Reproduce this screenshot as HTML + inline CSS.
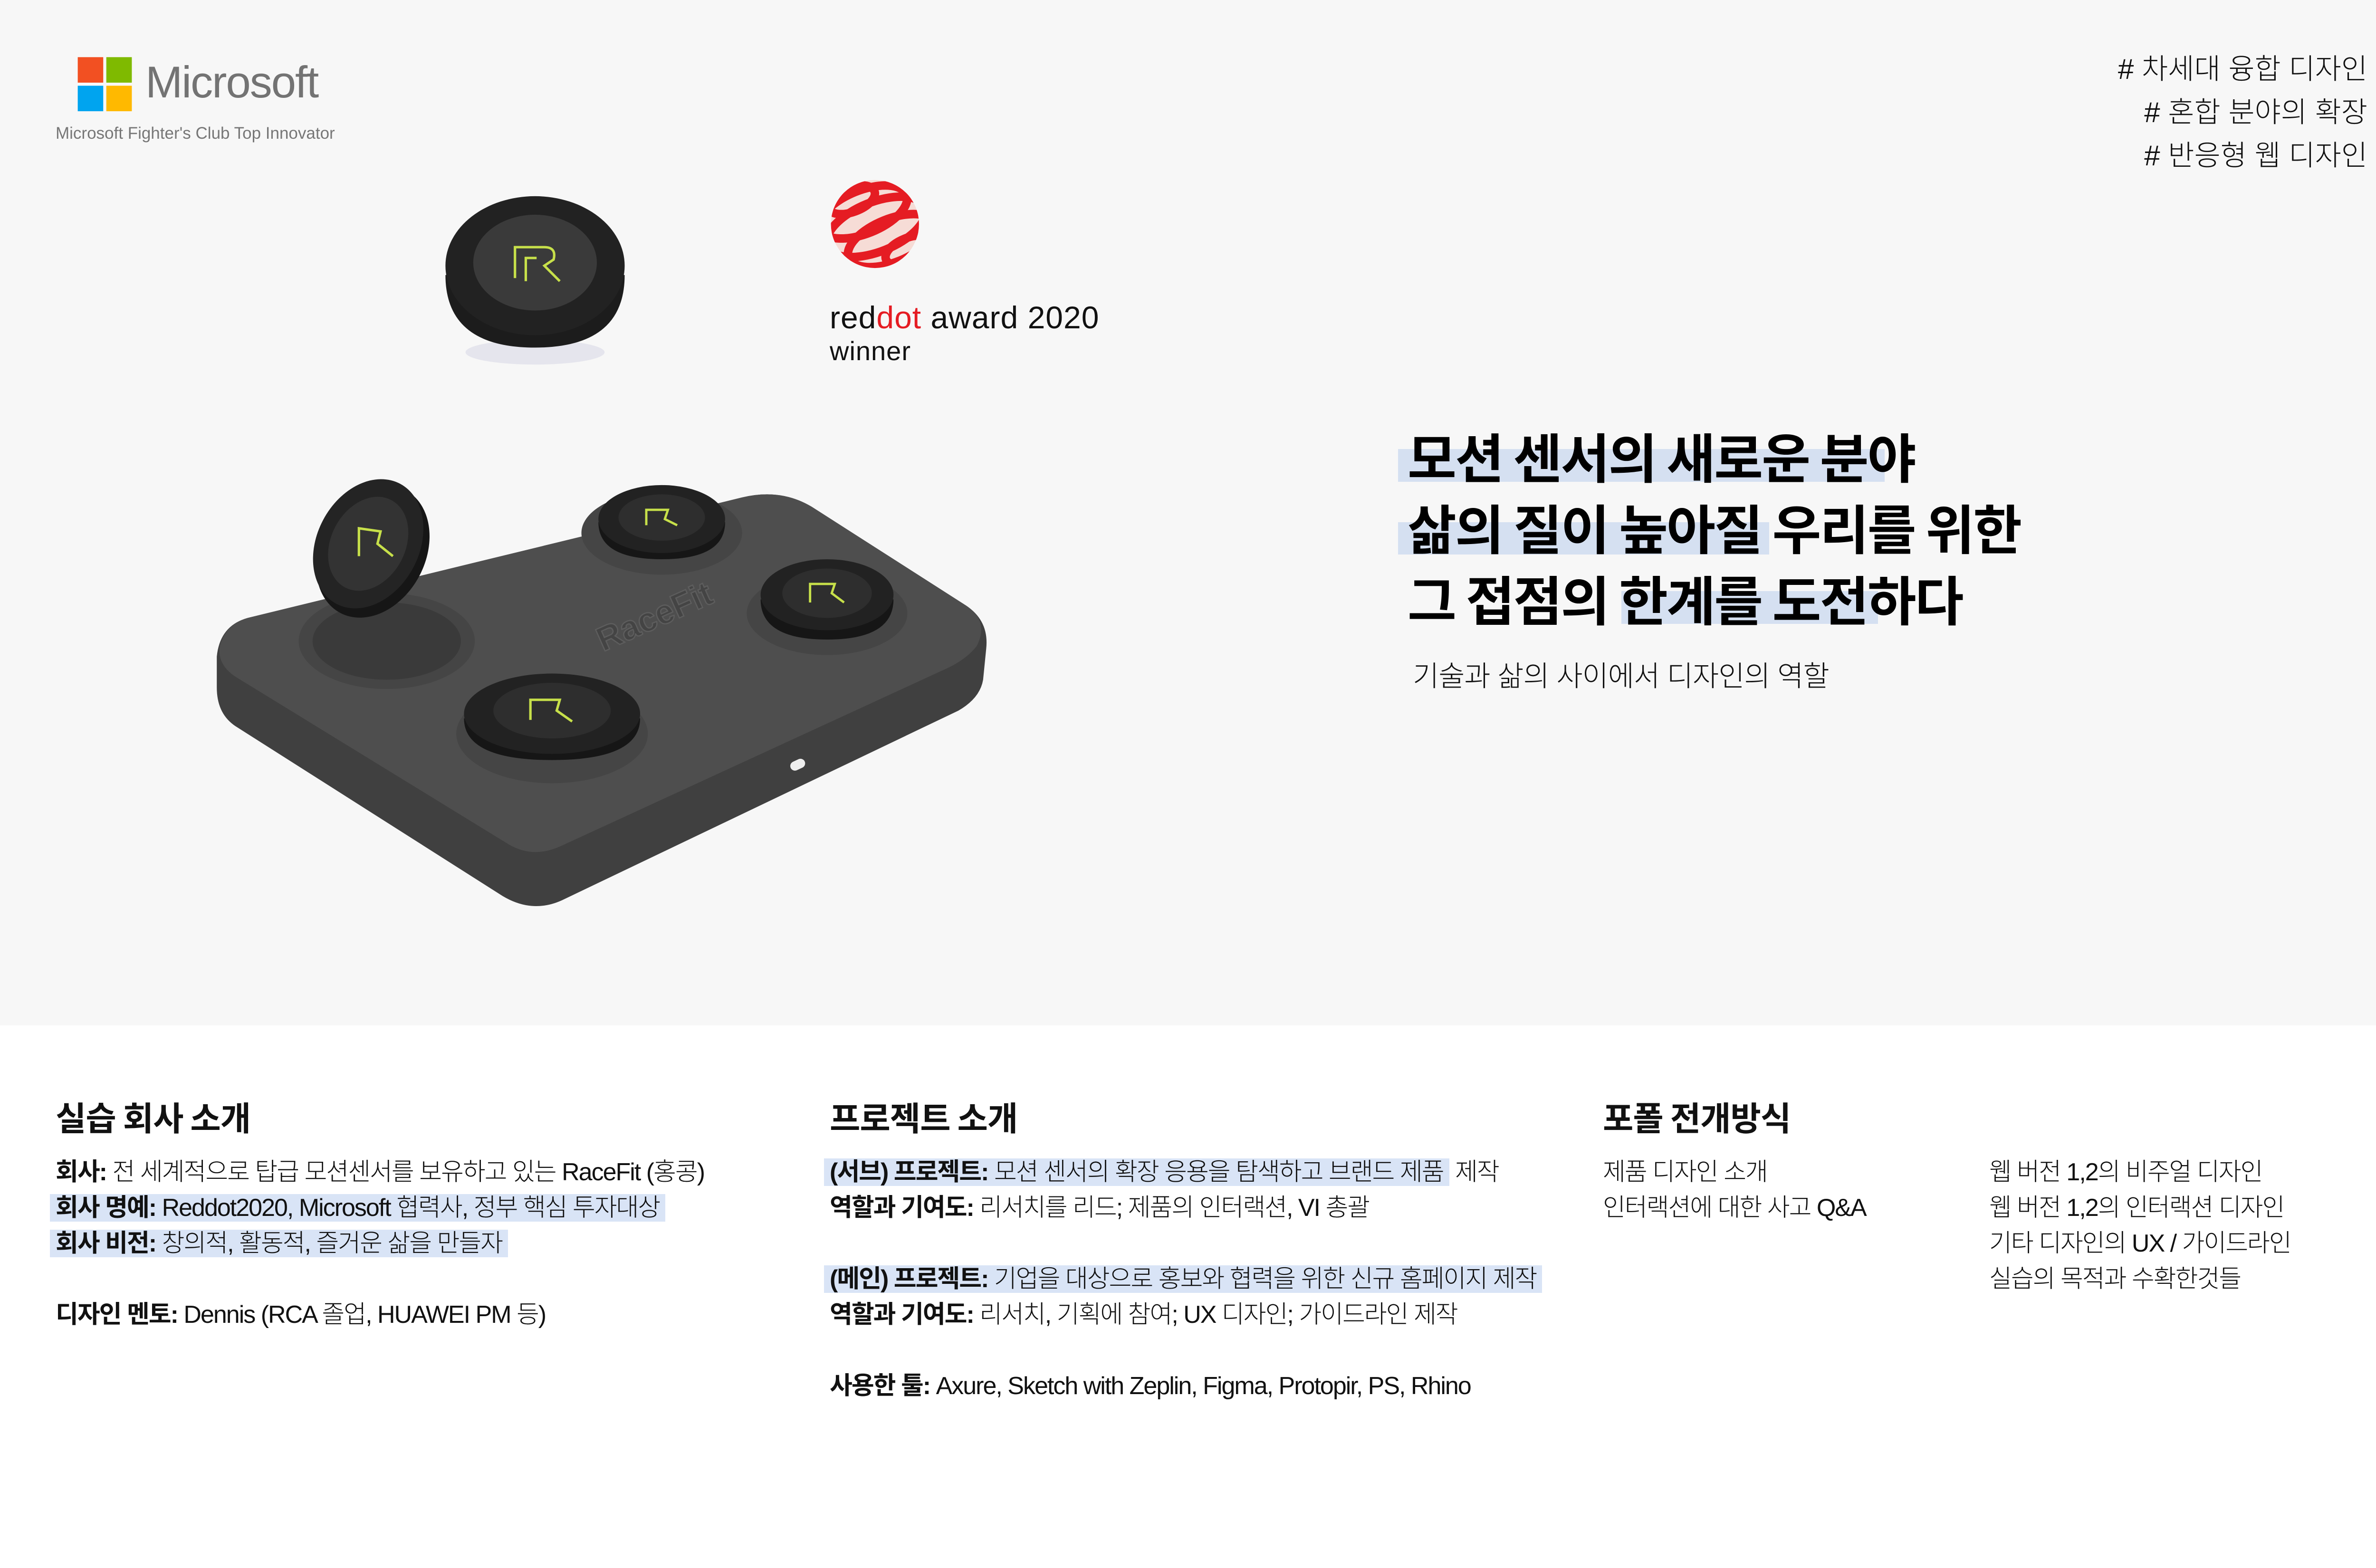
<!DOCTYPE html>
<html><head><meta charset="utf-8">
<style>
html,body{margin:0;padding:0}
body{width:5100px;height:3300px;position:relative;background:#fff;overflow:hidden;font-family:"Liberation Sans","Noto Sans CJK KR",sans-serif;color:#111}
.top{position:absolute;left:0;top:0;width:5100px;height:2158px;background:#f7f7f7}
.a{position:absolute;white-space:nowrap}
.kr{font-family:"Liberation Sans","Noto Sans CJK KR",sans-serif}
.h1{font-family:"Noto Sans CJK KR",sans-serif;font-weight:700;font-size:112px;line-height:112px;letter-spacing:-3px;color:#000}
.hl{position:absolute;background:#d5e0f1}
.tag{right:118px;font-size:60px;line-height:70px;font-weight:300;text-align:right}
.sh{font-family:"Noto Sans CJK KR",sans-serif;font-weight:700;font-size:70px;line-height:80px;letter-spacing:-1px}
.body{font-family:"Liberation Sans","Noto Sans CJK KR",sans-serif;font-size:52px;line-height:75px;font-weight:300;letter-spacing:-2px}
.body b{font-weight:700}
.body div{height:75px;white-space:nowrap}
.m{background:#d9e4f6;padding:0 12px;margin-left:-12px}
</style></head><body>
<div class="top"></div>

<svg class="a" style="left:0;top:0" width="5100" height="3300" viewBox="0 0 1568 1015">
  <rect x="50" y="37" width="16.5" height="16.5" fill="#f25022"/>
  <rect x="68.5" y="37" width="16.5" height="16.5" fill="#7fba00"/>
  <rect x="50" y="55.5" width="16.5" height="16.5" fill="#00a4ef"/>
  <rect x="68.5" y="55.5" width="16.5" height="16.5" fill="#ffb900"/>

  <g transform="translate(566,145)">
    <circle r="28.5" fill="#f6dcd6"/>
    <clipPath id="sp"><circle r="28.5"/></clipPath>
    <g clip-path="url(#sp)" fill="none" stroke="#e51c23" stroke-width="5.5">
      <ellipse cx="-9" cy="-20" rx="16" ry="8" transform="rotate(-20)"/>
      <ellipse cx="-4" cy="-10" rx="30" ry="14" transform="rotate(-22)"/>
      <ellipse cx="0" cy="2" rx="34" ry="16" transform="rotate(-22)"/>
      <ellipse cx="6" cy="14" rx="30" ry="14" transform="rotate(-22)"/>
      <ellipse cx="14" cy="24" rx="16" ry="8" transform="rotate(-22)"/>
    </g>
  </g>

  <ellipse cx="346" cy="228" rx="45" ry="8" fill="#d8d8e6" opacity="0.6"/>
  <path d="M288,178 Q288,225 346,225 Q404,225 404,178 Z" fill="#1c1c1c"/>
  <ellipse cx="346" cy="172" rx="58" ry="45" fill="#222"/>
  <ellipse cx="346" cy="170" rx="40" ry="31" fill="#3a3a3a"/>
  <path d="M333,180 L333,160 L352,160 Q360,160 358,168 L352,172 L362,182 M340,182 L340,167 L347,167" fill="none" stroke="#c7e04a" stroke-width="1.6"/>

  <path d="M160,400 L480,322 Q505,316 525,328 L625,392 Q640,402 638,420 L636,440 Q634,452 620,460 L365,582 Q345,592 325,580 L152,470 Q140,462 140,445 L140,425 Q142,405 160,400 Z" fill="#404040"/>
  <path d="M160,400 L480,322 Q505,316 525,328 L625,392 Q640,402 632,418 Q626,426 614,432 L362,548 Q344,556 328,546 L152,438 Q140,430 142,418 Q146,404 160,400 Z" fill="#4e4e4e"/>
  <text x="390" y="422" font-family="Liberation Sans" font-weight="700" font-size="22" fill="#444" stroke="#5d5d5d" stroke-width="0.8" transform="rotate(-24 390 422)">RaceFit</text>
  <ellipse cx="250" cy="415" rx="57" ry="31" fill="#454545"/>
  <ellipse cx="250" cy="415" rx="48" ry="25" fill="#3a3a3a"/>
  <ellipse cx="428" cy="345" rx="52" ry="27" fill="#454545"/>
  <ellipse cx="535" cy="397" rx="52" ry="27" fill="#454545"/>
  <ellipse cx="357" cy="475" rx="62" ry="32" fill="#454545"/>
  <g>
    <path d="M387,338 Q387,362 428,362 Q469,362 469,338 Z" fill="#161616"/>
    <ellipse cx="428" cy="336" rx="41" ry="22" fill="#222"/>
    <ellipse cx="428" cy="335" rx="28" ry="15" fill="#2e2e2e"/>
    <path d="M418,340 L418,330 L432,330 L430,336 L438,340" fill="none" stroke="#c7e04a" stroke-width="1.5"/>
  </g>
  <g>
    <path d="M492,388 Q492,414 535,414 Q578,414 578,388 Z" fill="#161616"/>
    <ellipse cx="535" cy="385" rx="43" ry="23" fill="#222"/>
    <ellipse cx="535" cy="384" rx="29" ry="16" fill="#2e2e2e"/>
    <path d="M524,390 L524,378 L540,378 L538,384 L546,390" fill="none" stroke="#c7e04a" stroke-width="1.5"/>
  </g>
  <g>
    <path d="M300,465 Q300,492 357,492 Q414,492 414,465 Z" fill="#161616"/>
    <ellipse cx="357" cy="462" rx="57" ry="26" fill="#222"/>
    <ellipse cx="357" cy="460" rx="38" ry="18" fill="#2e2e2e"/>
    <path d="M343,466 L343,453 L362,453 L360,460 L370,467" fill="none" stroke="#c7e04a" stroke-width="1.6"/>
  </g>
  <g transform="rotate(28 238 352)">
    <ellipse cx="243" cy="355" rx="34" ry="45" fill="#161616"/>
    <ellipse cx="238" cy="352" rx="33" ry="44" fill="#242424"/>
    <ellipse cx="238" cy="352" rx="24" ry="32" fill="#333"/>
  </g>
  <path d="M232,360 L232,342 L246,344 L244,352 L254,360" fill="none" stroke="#c7e04a" stroke-width="1.6"/>
  <rect x="511" y="492" width="10" height="6" rx="3" fill="#eee" transform="rotate(-25 516 495)"/>
</svg>

<div class="a" style="left:306px;top:118px;font-size:94px;line-height:110px;color:#737373;letter-spacing:-2px">Microsoft</div>
<div class="a" style="left:117px;top:259px;font-size:35px;line-height:44px;color:#777">Microsoft Fighter's Club Top Innovator</div>

<div class="a" style="left:1746px;top:628px;font-size:66px;line-height:80px;color:#111;letter-spacing:1px">red<span style="color:#e51c23">dot</span> award 2020</div>
<div class="a" style="left:1746px;top:704px;font-size:56px;line-height:70px;color:#111;letter-spacing:1px">winner</div>

<div class="a tag kr" style="top:111px">#  차세대 융합 디자인</div>
<div class="a tag kr" style="top:202px">#  혼합 분야의 확장</div>
<div class="a tag kr" style="top:293px">#  반응형 웹 디자인</div>

<div class="hl" style="left:2942px;top:945px;width:1024px;height:69px"></div>
<div class="hl" style="left:2942px;top:1099px;width:781px;height:68px"></div>
<div class="hl" style="left:3412px;top:1244px;width:540px;height:69px"></div>
<div class="a h1" style="left:2962px;top:902px">모션 센서의 새로운 분야</div>
<div class="a h1" style="left:2962px;top:1052px">삶의 질이 높아질 우리를 위한</div>
<div class="a h1" style="left:2962px;top:1202px">그 접점의 한계를 도전하다</div>
<div class="a kr" style="left:2973px;top:1388px;font-size:60px;line-height:72px;font-weight:300;letter-spacing:-1px">기술과 삶의 사이에서 디자인의 역할</div>

<div class="a sh" style="left:117px;top:2310px">실습 회사 소개</div>
<div class="a sh" style="left:1746px;top:2310px">프로젝트 소개</div>
<div class="a sh" style="left:3373px;top:2310px">포폴 전개방식</div>

<div class="a body" style="left:117px;top:2430px">
<div><b>회사:</b> 전 세계적으로 탑급 모션센서를 보유하고 있는 RaceFit (홍콩)</div>
<div><span class="m"><b>회사 명예:</b> Reddot2020, Microsoft 협력사, 정부 핵심 투자대상</span></div>
<div><span class="m"><b>회사 비전:</b> 창의적, 활동적, 즐거운 삶을 만들자</span></div>
<div></div>
<div><b>디자인 멘토:</b> Dennis (RCA 졸업, HUAWEI PM 등)</div>
</div>

<div class="a body" style="left:1746px;top:2430px">
<div><span class="m"><b>(서브) 프로젝트:</b> 모션 센서의 확장 응용을 탐색하고 브랜드 제품</span> 제작</div>
<div><b>역할과 기여도:</b> 리서치를 리드; 제품의 인터랙션, VI 총괄</div>
<div></div>
<div><span class="m"><b>(메인) 프로젝트:</b> 기업을 대상으로 홍보와 협력을 위한 신규 홈페이지 제작</span></div>
<div><b>역할과 기여도:</b> 리서치, 기획에 참여; UX 디자인; 가이드라인 제작</div>
<div></div>
<div><b>사용한 툴:</b> Axure, Sketch with Zeplin, Figma, Protopir, PS, Rhino</div>
</div>

<div class="a body" style="left:3373px;top:2430px">
<div>제품 디자인 소개</div>
<div>인터랙션에 대한 사고 Q&amp;A</div>
</div>

<div class="a body" style="left:4186px;top:2430px">
<div>웹 버전 1,2의 비주얼 디자인</div>
<div>웹 버전 1,2의 인터랙션 디자인</div>
<div>기타 디자인의 UX / 가이드라인</div>
<div>실습의 목적과 수확한것들</div>
</div>
</body></html>
